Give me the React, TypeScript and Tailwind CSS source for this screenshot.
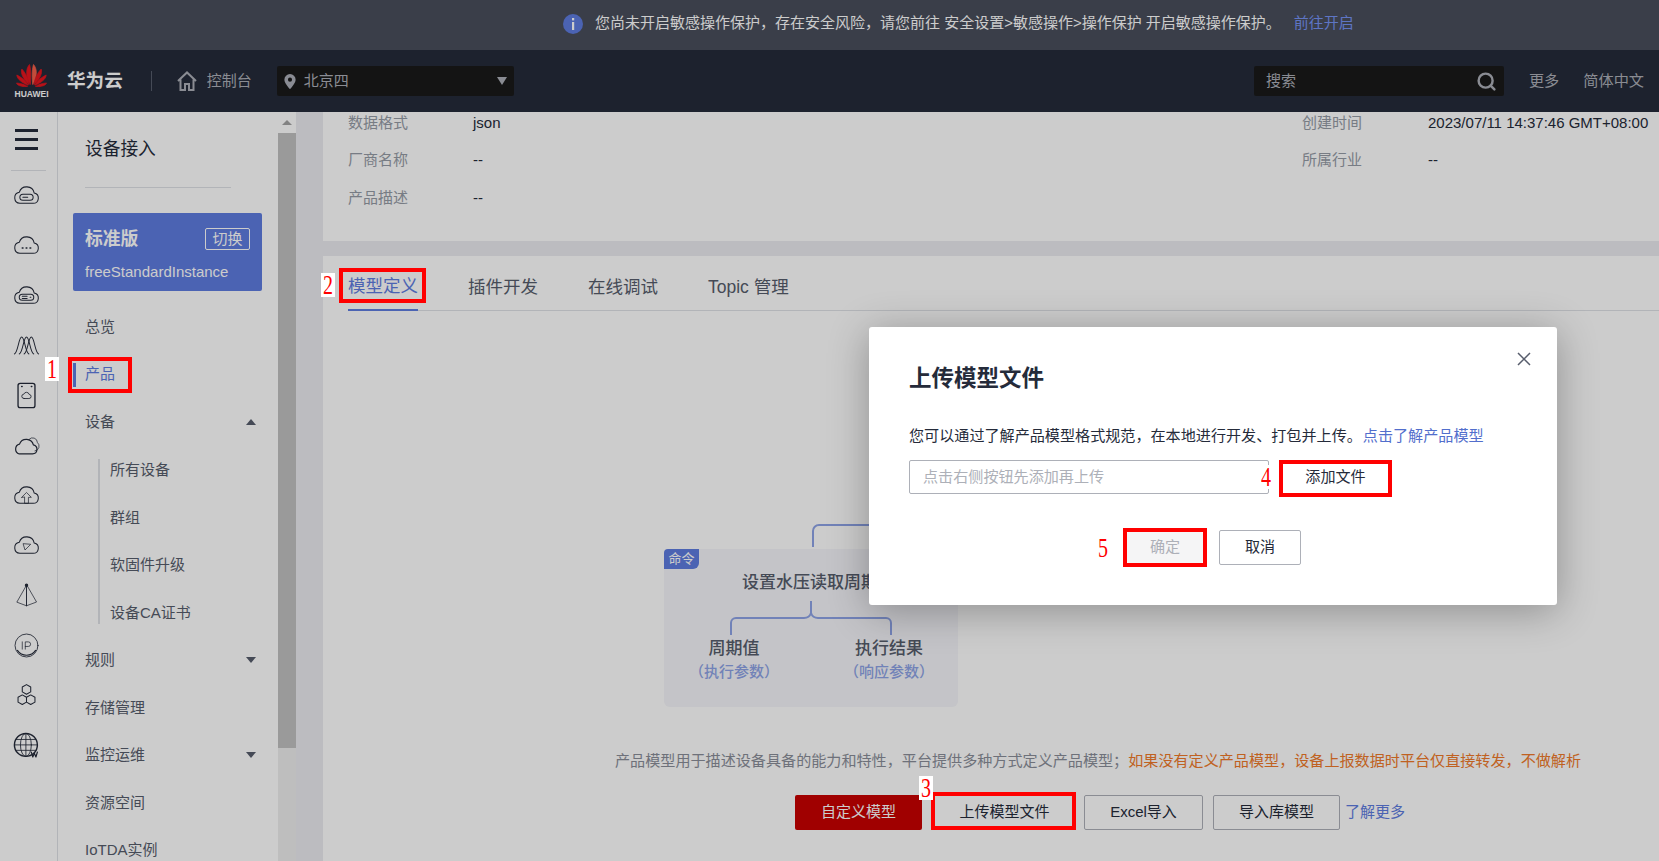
import { Search } from 'lucide-react'
import type { ReactNode } from 'react'

const fontStack = "[font-family:'Liberation_Sans','Noto_Sans_CJK_SC',sans-serif]"

const cloud = 'M6.5 18.5h11a4.3 4.3 0 0 0 .9-8.5 6.4 6.4 0 0 0-12.4-.6 4.6 4.6 0 0 0 .5 9.1z'

function RailIcon({ children }: { children: ReactNode }) {
  return (
    <div className="flex h-[50px] items-center justify-center pr-[4px]">
      <svg
        viewBox="0 0 24 24"
        className="h-[29px] w-[29px]"
        fill="none"
        stroke="#252b3a"
        strokeWidth="0.85"
        strokeLinecap="round"
        strokeLinejoin="round"
      >
        {children}
      </svg>
    </div>
  )
}

function Rail() {
  return (
    <div className="flex w-[58px] shrink-0 flex-col border-r border-[#dfe1e6] bg-white">
      <div className="flex h-[51px] flex-col justify-center gap-[6px] px-[15px] pt-1">
        <div className="h-[3px] w-[23px] bg-[#252b3a]" />
        <div className="h-[3px] w-[23px] bg-[#252b3a]" />
        <div className="h-[3px] w-[23px] bg-[#252b3a]" />
      </div>
      <div className="mx-[11px] mt-[7px] h-px bg-[#dfe1e6]" />
      <div className="-mt-[1px]">
        <RailIcon>
          <path d={cloud} />
          <rect x="6.5" y="11" width="11" height="5" rx="2.5" />
          <path d="M9 13.5h4" />
        </RailIcon>
        <RailIcon>
          <path d={cloud} />
          <path d="M8.5 14h.6M11.7 14h.6M14.9 14h.6" strokeWidth="1.3" />
        </RailIcon>
        <RailIcon>
          <path d={cloud} />
          <rect x="6" y="11" width="12" height="5" rx="2.5" />
          <path d="M8.5 12.6h4M8.5 14.4h4M15 13.5h.6" />
        </RailIcon>
        <RailIcon>
          <path d="M2 19c3-1 3.500-14 6-14s3 13 6 14" />
          <path d="M6 19c3-1 3.500-14 6-14s3 13 6 14" />
          <path d="M10 19c3-1 3.500-14 6-14s3 13 6 14" />
        </RailIcon>
        <RailIcon>
          <rect x="5" y="2" width="14" height="20" rx="1.8" strokeWidth="1.1" />
          <path d="M8 4.500h.4M16 4.500h.4" strokeWidth="1.2" />
          <path d="M10 14.500h4a1.700 1.700 0 0 0 .2-3.400 2.300 2.300 0 0 0-4.400-.2 1.800 1.800 0 0 0 .2 3.600z" strokeWidth="0.7" />
        </RailIcon>
        <RailIcon>
          <path d="M14 7a4 4 0 0 1 7 2.500 4 4 0 0 1-2 7" strokeWidth="0.6" />
          <path d="M6 19h11a3.800 3.800 0 0 0 .7-7.500 6 6 0 0 0-11.500-.6A4.200 4.200 0 0 0 6 19z" strokeWidth="1" />
        </RailIcon>
        <RailIcon>
          <path d={cloud} />
          <path d="M8 13.500l4-4 4 4h-2.400v5h-3.200v-5z" strokeWidth="0.6" />
        </RailIcon>
        <RailIcon>
          <path d={cloud} />
          <path d="M9.500 10.500l6 .5-4.500 4.500z" strokeWidth="0.6" />
        </RailIcon>
        <RailIcon>
          <path d="M12 3.500L4 17.500l8 3 8-3z" strokeWidth="0.6" />
          <path d="M12 3.500v17" strokeWidth="0.8" />
          <circle cx="12" cy="3.500" r="1" fill="#252b3a" />
        </RailIcon>
        <RailIcon>
          <circle cx="12" cy="12" r="9.500" strokeWidth="0.7" />
          <path d="M4.500 16a9 9 0 0 0 15 0" strokeWidth="0.9" />
          <path d="M8.500 9v6M11 15V9h2.500a1.800 1.800 0 0 1 0 3.800H11" strokeWidth="0.6" />
        </RailIcon>
        <RailIcon>
          <path d="M12 3l3.500 2v4L12 11 8.500 9V5zM8.500 11.500L12 13.500v4l-3.500 2-3.500-2v-4zM15.500 11.500l3.500 2v4l-3.500 2-3.500-2v-4z" />
        </RailIcon>
        <RailIcon>
          <circle cx="11.500" cy="11.500" r="9.500" strokeWidth="1.2" />
          <ellipse cx="11.500" cy="11.500" rx="4.500" ry="9.500" strokeWidth="0.7" />
          <path d="M2 11.500h19M3.500 7h16M3.500 16h16M11.500 2v19" strokeWidth="0.7" />
          <path d="M16 17.500l1.200 4 1.300-3 1.300 3 1.200-4" strokeWidth="1" />
        </RailIcon>
      </div>
    </div>
  )
}

function NavItem({ label, caret, active }: { label: string; caret?: 'up' | 'down'; active?: boolean }) {
  return (
    <div
      className={`relative flex h-[47.5px] items-center justify-between pl-[27px] pr-[22px] ${
        active ? 'text-[#5e7ce0]' : 'text-[#575d6c]'
      }`}
    >
      {active && <div className="absolute left-[15px] top-[12px] h-[24px] w-[3px] bg-[#5e7ce0]" />}
      <span>{label}</span>
      {caret === 'up' && (
        <div className="h-0 w-0 border-x-[5px] border-b-[6px] border-x-transparent border-b-[#575d6c]" />
      )}
      {caret === 'down' && (
        <div className="h-0 w-0 border-x-[5px] border-t-[6px] border-x-transparent border-t-[#575d6c]" />
      )}
    </div>
  )
}

function Sidebar() {
  return (
    <div className="w-[220px] shrink-0 bg-white text-[15px]">
      <div className="ml-[27px] mr-[47px] flex h-[76px] items-center border-b border-[#dfe1e6] text-[17.7px] text-[#252b3a]">
        设备接入
      </div>
      <div className="ml-[15px] mt-[25px] h-[78px] w-[189px] rounded-[2px] bg-[#5e7ce0] px-[12px] pt-[14px] text-white">
        <div className="flex items-center justify-between">
          <span className="text-[17.8px] font-semibold leading-[24px]">标准版</span>
          <span className="flex h-[22px] w-[45px] items-center justify-center rounded-[2px] border border-white text-[15px]">
            切换
          </span>
        </div>
        <div className="mt-[10px] text-[15px]">freeStandardInstance</div>
      </div>
      <div className="mt-[12px]">
        <NavItem label="总览" />
        <NavItem label="产品" active />
        <NavItem label="设备" caret="up" />
        <div className="my-[13px] ml-[40px] flex flex-col border-l-2 border-[#dfe1e6] text-[#575d6c]">
          {['所有设备', '群组', '软固件升级', '设备CA证书'].map((item, index) => (
            <div
              key={item}
              className={`flex h-[47.5px] shrink-0 items-center pl-[10px] ${index === 0 ? '-mt-[12px]' : ''} ${
                index === 3 ? '-mb-[13px]' : ''
              }`}
            >
              {item}
            </div>
          ))}
        </div>
        <NavItem label="规则" caret="down" />
        <NavItem label="存储管理" />
        <NavItem label="监控运维" caret="down" />
        <NavItem label="资源空间" />
        <NavItem label="IoTDA实例" />
      </div>
    </div>
  )
}

function Scrollbar() {
  return (
    <div className="flex w-[18px] shrink-0 flex-col bg-[#eeeeee]">
      <div className="flex h-[21px] items-center justify-center bg-white">
        <div className="h-0 w-0 border-x-[5px] border-b-[5px] border-x-transparent border-b-[#a3a3a3]" />
      </div>
      <div className="h-[615px] bg-[#c1c1c1]" />
    </div>
  )
}

function InfoRow({ label, value, label2, value2 }: { label: string; value: string; label2?: string; value2?: string }) {
  return (
    <div className="grid h-[37.5px] grid-cols-[125px_829px_126px_1fr] items-center">
      <span className="text-[#959ba6]">{label}</span>
      <span className="text-[#252b3a]">{value}</span>
      <span className="text-[#959ba6]">{label2}</span>
      <span className="text-[#252b3a]">{value2}</span>
    </div>
  )
}

function ModelDiagram() {
  return (
    <div className="relative ml-[341px] mt-[238px] h-[158px] w-[294px] rounded-[6px] bg-[#f5f6fa]">
      <div className="flex h-[20px] w-[35px] items-center justify-center rounded-br-[6px] rounded-tl-[4px] bg-[#5e7ce0] text-[13px] text-white">
        命令
      </div>
      <svg className="absolute -top-[26px] left-[147px] h-[26px] w-[80px]" viewBox="0 0 80 26" fill="none" stroke="#8ea3e6" strokeWidth="2">
        <path d="M2 24V8a6 6 0 0 1 6-6h72" />
      </svg>
      <svg className="absolute left-[65px] top-[52px] h-[36px] w-[164px]" viewBox="0 0 164 36" fill="none" stroke="#8ea3e6" strokeWidth="2">
        <path d="M2 34V22a5 5 0 0 1 5-5h68c4 0 6-2 7-5V0M82 12c1 3 3 5 7 5h68a5 5 0 0 1 5 5v12" />
      </svg>
      <div className="mt-[3px] whitespace-nowrap pl-[78px] text-[17px] font-medium leading-[22px] text-[#575d6c]">设置水压读取周期</div>
      <div className="mt-[44px] flex text-center">
        <div className="ml-[30px] flex w-[80px] flex-col items-center">
          <div className="text-[17px] font-medium leading-[22px] text-[#575d6c]">周期值</div>
          <div className="mt-[2px] whitespace-nowrap text-[15px] font-medium leading-[20px] text-[#8ea3e6]">（执行参数）</div>
        </div>
        <div className="ml-[75px] flex w-[80px] flex-col items-center">
          <div className="text-[17px] font-medium leading-[22px] text-[#575d6c]">执行结果</div>
          <div className="mt-[2px] whitespace-nowrap text-[15px] font-medium leading-[20px] text-[#8ea3e6]">（响应参数）</div>
        </div>
      </div>
    </div>
  )
}

function Annotation({ className }: { className: string }) {
  return <div className={`absolute border-[4px] border-[#ff0000] ${className}`} />
}

function Num({ n, className }: { n: number; className: string }) {
  return (
    <div
      className={`absolute flex h-[24px] w-[14px] items-center justify-center bg-white [font-family:'Liberation_Serif',serif] text-[20px] text-[#ff0000] ${className}`}
    >
      <span className="scale-y-[1.35]">{n}</span>
    </div>
  )
}

function UploadDialog() {
  return (
    <div className="absolute left-[869px] top-[327px] h-[278px] w-[688px] rounded-[3px] bg-white pl-[40px] pt-[36px] text-[15.1px] text-[#252b3a] shadow-[0_6px_40px_rgba(0,0,0,0.3)]">
      <div className="text-[22.5px] font-semibold leading-[32px]">上传模型文件</div>
      <svg className="absolute right-[26px] top-[25px] h-[14px] w-[14px]" viewBox="0 0 14 14" stroke="#575d6c" strokeWidth="1.5">
        <path d="M1 1l12 12M13 1L1 13" />
      </svg>
      <div className="mt-[30px] whitespace-nowrap leading-[22px]">
        您可以通过了解产品模型格式规范，在本地进行开发、打包并上传。
        <span className="ml-[1px] text-[#526ecc]">点击了解产品模型</span>
      </div>
      <div className="mt-[13px] flex">
        <div className="flex h-[34px] w-[360px] items-center rounded-[2px] border border-[#adb0b8] pl-[13px] text-[#adb0b8]">
          点击右侧按钮先添加再上传
        </div>
        <div className="ml-[10px] flex h-[34px] w-[113px] items-center justify-center">添加文件</div>
      </div>
      <div className="ml-[218px] mt-[36px] flex items-center">
        <div className="flex h-[31px] w-[76px] items-center justify-center rounded-[2px] bg-[#f5f5f6] text-[#adb0b8]">确定</div>
        <div className="ml-[16px] flex h-[35px] w-[82px] items-center justify-center rounded-[2px] border border-[#adb0b8]">取消</div>
      </div>
    </div>
  )
}

export default function App() {
  return (
    <div className={`relative flex h-[861px] w-[1659px] flex-col overflow-hidden bg-[#ebecf0] text-[15px] ${fontStack}`}>
      <div className="flex h-[50px] shrink-0 items-center bg-[#494e5c] pb-[3px] pl-[563px] text-[15px] text-white">
        <div className="flex h-[20px] w-[20px] items-center justify-center rounded-full bg-[#5e7ce0]">
          <svg viewBox="0 0 20 20" className="h-[20px] w-[20px]" fill="white">
            <rect x="9" y="4" width="2.2" height="2.4" />
            <rect x="9" y="8" width="2.2" height="8" />
          </svg>
        </div>
        <span className="ml-[12px]">您尚未开启敏感操作保护，存在安全风险，请您前往 安全设置&gt;敏感操作&gt;操作保护 开启敏感操作保护。</span>
        <span className="ml-[13px] text-[#7693f5]">前往开启</span>
      </div>

      <div className="flex h-[62px] shrink-0 items-center bg-[#252b3a] pl-[15px] pr-[15px] text-[#adb0b8]">
        <div className="flex w-[33px] flex-col items-center">
          <svg viewBox="0 0 32 24" className="h-[24px] w-[33px]" fill="#e8161e" stroke="#e8161e" strokeWidth="0.7">
            <path d="M14.800 21.500C12 17 10.500 11 11.500 6.500 12 3.500 14 1.500 14 1.500c1.200 3.500 1.800 10 .8 20z" />
            <path d="M17.200 21.500C20 17 21.500 11 20.500 6.500 20 3.500 18 1.500 18 1.500c-1.200 3.500-1.800 10-.8 20z" fill="#f5604a" stroke="#f5604a" />
            <path d="M13.500 21.800C9.500 18 6.500 13.500 6 9.500c-.2-2 .3-3.500.3-3.500 3 3 6.500 8.500 7.200 15.800z" />
            <path d="M18.500 21.800c4-3.800 7-8.300 7.500-12.300.2-2-.3-3.500-.3-3.500-3 3-6.500 8.500-7.200 15.800z" />
            <path d="M12.500 22.300C8 20.500 3.500 17.500 2 14.500c-.6-1.300-.7-2.500-.7-2.500 4 1.800 9 5.500 11.200 10.300z" />
            <path d="M19.500 22.300c4.500-1.800 9-4.800 10.500-7.800.6-1.300.7-2.500.7-2.500-4 1.800-9 5.500-11.200 10.300z" />
            <path d="M12 23.500c-4 .5-8-.3-10-2-.7-.6-1-1.500-1-1.500 4 .3 8.500 1.500 11 3.500z" />
            <path d="M20 23.500c4 .5 8-.3 10-2 .7-.6 1-1.500 1-1.500-4 .3-8.500 1.500-11 3.500z" />
          </svg>
          <span className="mt-[2px] text-[8.5px] font-bold leading-[10px] text-white">HUAWEI</span>
        </div>
        <span className="ml-[19px] text-[18.6px] font-bold text-white">华为云</span>
        <div className="ml-[28px] h-[20px] w-px bg-[#575d6c]" />
        <svg viewBox="0 0 20 20" className="ml-[25px] h-[22px] w-[20px]" fill="none" stroke="#adb0b8" strokeWidth="2">
          <path d="M1 10l9-8.500L19 10M3.500 8.500V19H8v-6h4v6h4.500V8.500" />
        </svg>
        <span className="ml-[10px] text-[15px]">控制台</span>
        <div className="ml-[25px] flex h-[30px] w-[237px] items-center rounded-[2px] bg-[#1a1a1a] pl-[7px] pr-[7px]">
          <svg viewBox="0 0 12 16" className="h-[15px] w-[12px]" fill="#adb0b8">
            <path d="M6 0a6 6 0 0 0-6 6c0 4 6 10 6 10s6-6 6-10a6 6 0 0 0-6-6zm0 8.200A2.200 2.200 0 1 1 6 3.800a2.200 2.200 0 0 1 0 4.400z" />
          </svg>
          <span className="ml-[8px] text-[15px]">北京四</span>
          <div className="ml-auto h-0 w-0 border-x-[5px] border-t-[8px] border-x-transparent border-t-[#adb0b8]" />
        </div>
        <div className="ml-auto flex h-[30px] w-[250px] items-center justify-between rounded-[2px] bg-[#1a1a1a] pl-[12px] pr-[7px] text-[15px]">
          <span>搜索</span>
          <Search size={21} strokeWidth={2.8} />
        </div>
        <span className="ml-[25px] text-[15.2px]">更多</span>
        <span className="ml-[24px] text-[15.2px]">简体中文</span>
      </div>

      <div className="flex min-h-0 flex-1">
        <Rail />
        <Sidebar />
        <Scrollbar />
        <div className="flex min-w-0 flex-1 flex-col pl-[27px]">
          <div className="h-[129px] shrink-0 overflow-hidden bg-white pl-[25px]">
            <div className="-mt-[8px]">
              <InfoRow label="数据格式" value="json" label2="创建时间" value2="2023/07/11 14:37:46 GMT+08:00" />
              <InfoRow label="厂商名称" value="--" label2="所属行业" value2="--" />
              <InfoRow label="产品描述" value="--" />
            </div>
          </div>
          <div className="mt-[15px] flex-1 bg-white">
            <div className="ml-[25px] flex h-[55px] gap-[50px] border-b border-[#dfe1e6] text-[17.5px] text-[#575d6c]">
              <div className="flex h-[55px] items-center border-b-2 border-[#5e7ce0] pt-[8px] text-[#5e7ce0]">模型定义</div>
              <div className="flex items-center pt-[8px]">插件开发</div>
              <div className="flex items-center pt-[8px]">在线调试</div>
              <div className="flex items-center pt-[8px]">Topic 管理</div>
            </div>
            <ModelDiagram />
            <div className="ml-[292px] mt-[44px] whitespace-nowrap text-[15.1px] leading-[20px] text-[#8a8e99]">
              产品模型用于描述设备具备的能力和特性，平台提供多种方式定义产品模型；
              <span className="text-[#f07a2a]">如果没有定义产品模型，设备上报数据时平台仅直接转发，不做解析</span>
            </div>
            <div className="ml-[472px] mt-[24px] flex h-[35px] items-center text-[15px] text-[#252b3a]">
              <div className="flex h-[35px] w-[127px] items-center justify-center rounded-[2px] bg-[#c80000] text-white">自定义模型</div>
              <div className="ml-[13px] flex h-[35px] w-[139px] items-center justify-center">上传模型文件</div>
              <div className="ml-[10px] flex h-[35px] w-[119px] items-center justify-center rounded-[2px] border border-[#adb0b8]">Excel导入</div>
              <div className="ml-[10px] flex h-[35px] w-[127px] items-center justify-center rounded-[2px] border border-[#adb0b8]">导入库模型</div>
              <span className="ml-[5px] text-[#5e7ce0]">了解更多</span>
            </div>
          </div>
        </div>
      </div>

      {/* dim layer under the upload dialog */}
      <div className="absolute inset-0 bg-black/20" />
      <UploadDialog />

      {/* red tutorial marks drawn over the screenshot */}
      <Annotation className="left-[68px] top-[357px] h-[36px] w-[64px]" />
      <Num n={1} className="left-[45px] top-[357px]" />
      <Annotation className="left-[339px] top-[268px] h-[35px] w-[87px]" />
      <Num n={2} className="left-[321px] top-[273px]" />
      <Annotation className="left-[931px] top-[792px] h-[38px] w-[145px]" />
      <Num n={3} className="left-[919px] top-[776px]" />
      <Annotation className="left-[1279px] top-[460px] h-[37px] w-[113px]" />
      <Num n={4} className="left-[1259px] top-[465px]" />
      <Annotation className="left-[1123px] top-[528px] h-[39px] w-[84px]" />
      <Num n={5} className="left-[1096px] top-[536px]" />
    </div>
  )
}
